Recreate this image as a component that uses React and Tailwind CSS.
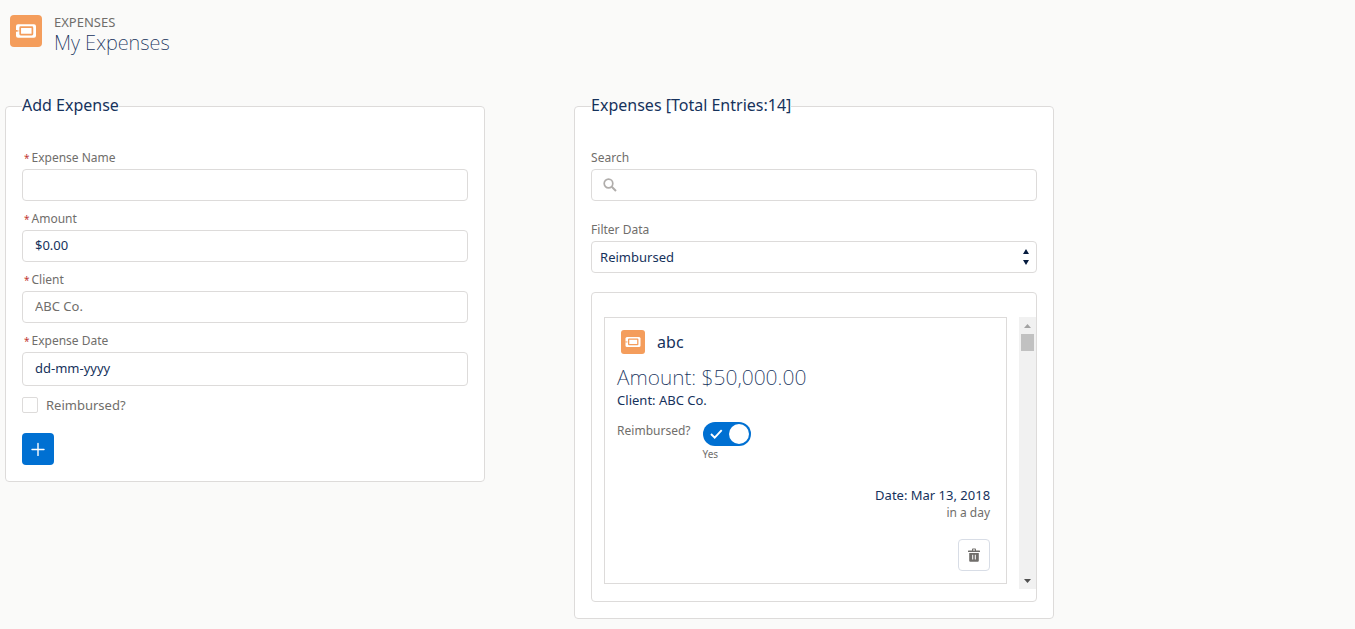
import React from 'react';

function TicketIcon({ className }) {
  return (
    <svg viewBox="0 0 32 32" className={className} aria-hidden="true">
      <rect width="32" height="32" rx="4" fill="#f49d5c" />
      <rect x="6" y="9.2" width="20" height="13.5" rx="2" fill="#fff" />
      <rect x="10.2" y="12.2" width="12.2" height="7.4" rx="0.5" fill="none" stroke="#f49d5c" strokeWidth="1.7" />
      <path d="M6 15h.8a.9.9 0 0 1 0 1.800H6z" fill="#f49d5c" />
      <path d="M7 15.900h3" stroke="#f49d5c" strokeWidth="1" opacity=".5" />
    </svg>
  );
}

const inputClass =
  'block h-8 w-full rounded border border-[#dddbda] bg-white px-3 pb-0.5 text-[13px] text-[#16325c] placeholder:text-[#706e6b]';

function Field({ id, label, children }) {
  return (
    <div>
      <label htmlFor={id} className="mb-[3px] ml-0.5 block text-xs leading-4 text-[#706e6b]">
        <span className="mr-0.5 text-[10px] text-[#c23934]">*</span>
        {label}
      </label>
      {children}
    </div>
  );
}

function Panel({ title, children }) {
  return (
    <div className="w-[42%] px-[5px]">
      <fieldset className="max-w-[480px] rounded border border-[#dddbda] bg-white px-4 pt-8 pb-4">
        <legend className="pb-0.5 text-base leading-[22px] text-[#16325c]">{title}</legend>
        {children}
      </fieldset>
    </div>
  );
}

function AddExpense() {
  return (
    <Panel title="Add Expense">
      <div className="flex flex-col gap-2.5">
        <Field id="name" label="Expense Name">
          <input id="name" type="text" className={inputClass} />
        </Field>
        <Field id="amount" label="Amount">
          <input id="amount" type="text" defaultValue="$0.00" className={inputClass} />
        </Field>
        <Field id="client" label="Client">
          <input id="client" type="text" placeholder="ABC Co." className={inputClass} />
        </Field>
        <Field id="date" label="Expense Date">
          <input
            id="date"
            type="text"
            placeholder="dd-mm-yyyy"
            className="block h-[34px] w-full rounded border border-[#dddbda] bg-white px-3 pb-0.5 text-[13px] text-[#16325c] placeholder:text-[#16325c]"
          />
        </Field>
      </div>
      <label className="mt-[9px] flex items-center gap-2 text-[13px] leading-5 text-[#706e6b]">
        <input type="checkbox" className="size-4 appearance-none rounded-xs border border-[#dddbda] bg-white checked:bg-[#0070d2]" />
        Reimbursed?
      </label>
      <button type="button" aria-label="Add expense" className="mt-[18px] flex size-8 items-center justify-center rounded bg-[#0070d2]">
        <svg viewBox="0 0 14 14" className="size-3.5" aria-hidden="true">
          <path d="M7 1.500v12M1 7.500h12" stroke="#fff" strokeWidth="1.4" strokeLinecap="round" />
        </svg>
      </button>
    </Panel>
  );
}

function ExpenseCard() {
  return (
    <article className="mr-3 min-w-0 flex-1 self-start border border-[#dddbda] bg-white p-3">
      <h3 className="flex items-center gap-3 pl-1 text-base leading-6 text-[#16325c]">
        <TicketIcon className="size-6" />
        abc
      </h3>
      <p className="mt-3 pb-0.5 text-[21px] leading-[22px] font-extralight text-[#16325c]">Amount: $50,000.00</p>
      <p className="text-[13px] leading-5 text-[#16325c]">Client: ABC Co.</p>
      <div className="mt-3 flex items-start gap-3">
        <label htmlFor="reimbursed" className="text-xs leading-[18px] text-[#706e6b]">Reimbursed?</label>
        <div>
          <span className="relative block h-6 w-12">
            <input
              id="reimbursed"
              type="checkbox"
              defaultChecked
              className="block h-6 w-12 appearance-none rounded-full bg-[#b0adab] checked:bg-[#0070d2]"
            />
            <svg viewBox="0 0 48 24" className="pointer-events-none absolute inset-0" aria-hidden="true">
              <path d="M8 12l3.700 3.700 7-7.500" fill="none" stroke="#fff" strokeWidth="1.900" />
              <circle cx="36" cy="12" r="10" fill="#fff" />
            </svg>
          </span>
          <span className="block text-[10px] leading-4 text-[#706e6b]">Yes</span>
        </div>
      </div>
      <div className="mt-[23px] pr-1 text-right">
        <p className="text-[13px] leading-5 text-[#16325c]">Date: Mar 13, 2018</p>
        <p className="text-xs leading-4 text-[#706e6b]">in a day</p>
        <button type="button" aria-label="Delete" className="mt-[18px] ml-auto flex size-8 items-center justify-center rounded border border-[#d8dde6] bg-white">
          <svg viewBox="0 0 14 14" className="size-3.5" fill="#706e6b" aria-hidden="true">
            <path d="M5 2.500V1.600C5 .9 5.400.500 6 .500h2c.6 0 1 .4 1 1.100v.9h3.500c.3 0 .5.200.5.500v.9H1V3c0-.300.200-.500.500-.500zM6 2.500h2v-.9H6z" />
            <path fillRule="evenodd" d="M2.200 5h9.600v7.400c0 .8-.5 1.300-1.300 1.300h-7c-.8 0-1.300-.5-1.300-1.300zM5.200 6.700v4.800h1V6.700zm2.600 0v4.800h1V6.700z" />
          </svg>
        </button>
      </div>
    </article>
  );
}

function ScrollBar() {
  return (
    <div className="flex w-[17px] flex-col items-center bg-[#f1f1f1]" aria-hidden="true">
      <span className="flex h-[17px] items-center">
        <svg viewBox="0 0 7 4" className="h-1 w-[7px]" fill="#a3a3a3"><path d="M3.500 0L7 4H0z" /></svg>
      </span>
      <span className="h-[17px] w-[13px] bg-[#c1c1c1]" />
      <span className="mt-auto flex h-[17px] items-center">
        <svg viewBox="0 0 7 4" className="h-1 w-[7px]" fill="#505050"><path d="M0 0h7L3.500 4z" /></svg>
      </span>
    </div>
  );
}

function ExpenseList() {
  return (
    <Panel title="Expenses [Total Entries:14]">
      <label htmlFor="search" className="mb-[3px] block text-xs leading-4 text-[#706e6b]">Search</label>
      <div className="relative">
        <input id="search" type="search" className="block h-8 w-full rounded border border-[#dddbda] bg-white pr-3 pl-8 text-[13px] text-[#16325c]" />
        <svg viewBox="0 0 14 14" className="pointer-events-none absolute top-[9px] left-3 size-3.5" fill="none" stroke="#b0adab" aria-hidden="true">
          <circle cx="5.500" cy="5.500" r="4.300" strokeWidth="1.700" />
          <path d="M8.700 8.700L13 13" strokeWidth="2" />
        </svg>
      </div>
      <label htmlFor="filter" className="mt-[21px] mb-[3px] block text-xs leading-4 text-[#706e6b]">Filter Data</label>
      <div className="relative">
        <select id="filter" className="block h-8 w-full appearance-none rounded border border-[#dddbda] bg-white px-2 pt-0.5 text-[13px] text-[#16325c]">
          <option>Reimbursed</option>
          <option>Not Reimbursed</option>
        </select>
        <svg viewBox="0 0 6 16" className="pointer-events-none absolute top-2 right-2 h-4 w-1.5" fill="#061c3f" aria-hidden="true">
          <path d="M3 0l3 5H0zM0 11h6l-3 5z" />
        </svg>
      </div>
      <div className="mt-[19px] flex rounded border border-[#dddbda] pt-6 pb-3 pl-3">
        <div className="flex h-[272px] flex-1">
          <ExpenseCard />
          <ScrollBar />
        </div>
      </div>
    </Panel>
  );
}

export default function App() {
  return (
    <div className="min-h-screen bg-[#fafaf9] pb-2.5 font-['Noto_Sans',sans-serif]">
      <header className="flex gap-3 px-2.5 pt-[15px]">
        <TicketIcon className="size-8" />
        <div>
          <p className="text-[13px] leading-[14px] text-[#706e6b]">EXPENSES</p>
          <h1 className="text-xl leading-7 font-extralight text-[#16325c]">My Expenses</h1>
        </div>
      </header>
      <main className="mt-[37px] flex items-start">
        <AddExpense />
        <ExpenseList />
      </main>
    </div>
  );
}
